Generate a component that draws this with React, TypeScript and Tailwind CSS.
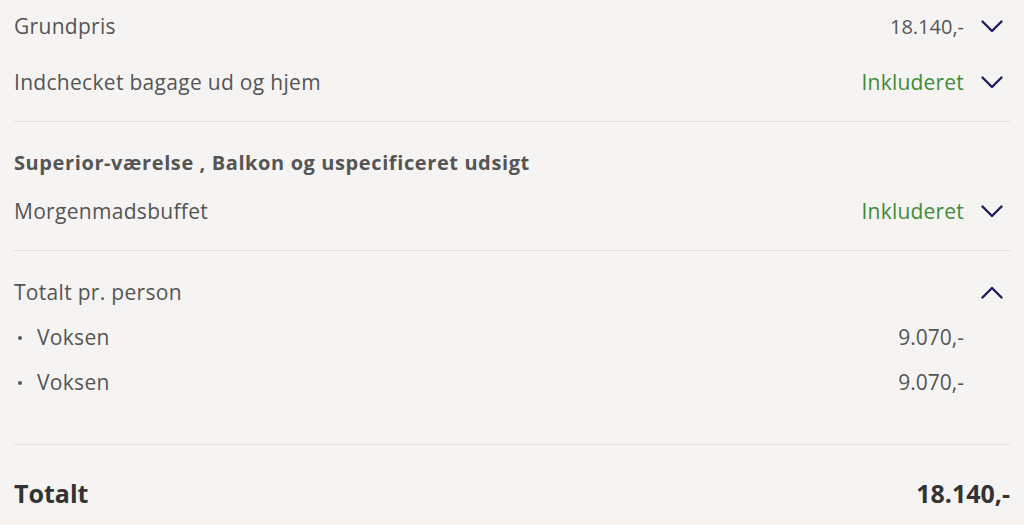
import React from "react";

const Chevron: React.FC<{ up?: boolean }> = ({ up }) => (
  <svg width="22" height="13" viewBox="0 0 22 13" fill="none" className="text-[#1f1c5d]">
    <path
      d={up ? "M1.5 11.5 L11 2 L20.5 11.5" : "M1.5 1.5 L11 11 L20.5 1.5"}
      stroke="currentColor"
      strokeWidth="2.4"
      strokeLinecap="round"
      strokeLinejoin="round"
    />
  </svg>
);

const Row: React.FC<{
  label: React.ReactNode;
  value?: React.ReactNode;
  green?: boolean;
  chevron?: "up" | "down" | null;
  className?: string;
}> = ({ label, value, green, chevron = "down", className = "" }) => (
  <div className={`flex items-center justify-between ${className}`}>
    <div className="pt-[2px] text-[21px] tracking-[0.3px] text-[#555555]">{label}</div>
    <div className="flex items-center">
      {value && (
        <span
          className={`pt-[2px] ${green ? "text-[21px] tracking-[0.2px] text-[#3f8c39]" : "text-[20px] text-[#555555]"}`}
        >
          {value}
        </span>
      )}
      <div className="w-[46px] flex justify-end pr-[7px]">
        {chevron && <Chevron up={chevron === "up"} />}
      </div>
    </div>
  </div>
);

export default function App() {
  return (
    <div
      className="w-[1024px] h-[525px] overflow-hidden bg-[#f5f4f2] px-[14px]"
      style={{ fontFamily: "'Open Sans', Lato, sans-serif" }}
    >
      {/* flyrejse */}
      <div className="border-b border-[#e3e1de] pb-[9px]">
        <Row className="h-[52px]" label="Grundpris" value="18.140,-" />
        <Row className="h-[60px]" label="Indchecket bagage ud og hjem" value="Inkluderet" green />
      </div>

      {/* hotel */}
      <div className="border-b border-[#e3e1de] pt-[20px] pb-[10px]">
        <div className="h-[40px] pt-[2px] flex items-center text-[20px] tracking-[0.6px] font-bold text-[#555555]">
          Superior-værelse , Balkon og uspecificeret udsigt
        </div>
        <Row className="h-[58px]" label="Morgenmadsbuffet" value="Inkluderet" green />
      </div>

      {/* pr. person */}
      <div className="border-b border-[#e3e1de] pt-[19px] pb-[40px]">
        <Row className="h-[44px]" label="Totalt pr. person" chevron="up" />
        {["h-[46px]", "h-[44px]"].map((h, i) => (
          <Row
            key={i}
            className={h}
            label={
              <span className="flex items-center">
                <span className="w-[4px] h-[4px] rounded-full bg-[#555555] ml-[4px] mr-[15px]" />
                Voksen
              </span>
            }
            value={<span className="text-[21px]">9.070,-</span>}
            chevron={null}
          />
        ))}
      </div>

      {/* total */}
      <div className="h-[96px] pt-[2px] flex items-center justify-between text-[25px] font-bold text-[#333333]">
        <span>Totalt</span>
        <span>18.140,-</span>
      </div>
    </div>
  );
}
